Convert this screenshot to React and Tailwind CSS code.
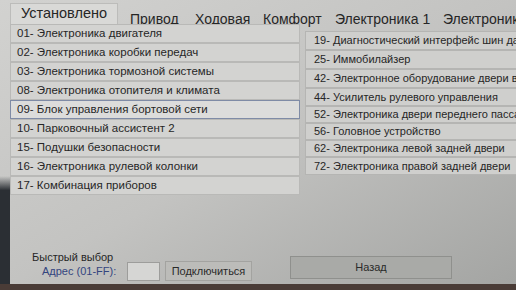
import React from 'react';

const leftItems = [
  '01- Электроника двигателя',
  '02- Электроника коробки передач',
  '03- Электроника тормозной системы',
  '08- Электроника отопителя и климата',
  '09- Блок управления бортовой сети',
  '10- Парковочный ассистент 2',
  '15- Подушки безопасности',
  '16- Электроника рулевой колонки',
  '17- Комбинация приборов',
];

const rightItems = [
  { label: '19- Диагностический интерфейс шин данных', h: 'h-[19px]' },
  { label: '25- Иммобилайзер', h: 'h-[19px]' },
  { label: '42- Электронное оборудование двери водителя', h: 'h-[19px]' },
  { label: '44- Усилитель рулевого управления', h: 'h-[18px]' },
  { label: '52- Электроника двери переднего пассажира', h: 'h-[17px]' },
  { label: '56- Головное устройство', h: 'h-[17px]' },
  { label: '62- Электроника левой задней двери', h: 'h-[17px]' },
  { label: '72- Электроника правой задней двери', h: 'h-[18px]' },
];

export default function App() {
  return (
    <div className="w-[516px] h-[290px] overflow-hidden flex flex-col bg-gradient-to-br from-[#d2d2d0] via-[#c3c3c1] to-[#a3a4a2] text-[#262626] font-['Liberation_Sans',Arial,sans-serif]">
      <div className="flex flex-1 min-h-0">
        {/* dark monitor bezel creeping in on the left */}
        <div className="w-[10px] shrink-0 bg-gradient-to-b from-transparent from-62% to-[#2b2f34] to-67%" />

        <div className="flex-1 flex flex-col min-w-0">
          {/* tabs */}
          <div className="h-[24px] shrink-0 flex items-start whitespace-nowrap text-[14px]">
            <div className="shrink-0 mt-[3px] h-[21px] w-[108px] pl-[10px] text-[14.5px] leading-[19px] bg-[#d9d9d7] border-t border-l border-r border-[#bcbcba]">
              Установлено
            </div>
            <div className="flex min-w-0 ml-[12px] pt-[11px] leading-[16px] overflow-hidden">
              <span className="w-[65px] shrink-0">Привод</span>
              <span className="w-[68px] shrink-0">Ходовая</span>
              <span className="w-[72px] shrink-0">Комфорт</span>
              <span className="w-[108px] shrink-0">Электроника 1</span>
              <span className="shrink-0">Электроника 2</span>
            </div>
          </div>

          {/* module lists */}
          <div className="flex">
            <div className="w-[290px] shrink-0 flex flex-col">
              {leftItems.map((item, i) => (
                <div
                  key={item}
                  className={
                    i === 4
                      ? 'h-[19px] flex items-center pl-[6px] text-[11.5px] bg-[#dcdcdb] border border-[#7f8ba6]'
                      : 'h-[19px] flex items-center pl-[6px] text-[11.5px] bg-[#d3d3d1] border border-[#b9b9b7]'
                  }
                >
                  {item}
                </div>
              ))}
            </div>
            <div className="flex-1 min-w-0 ml-[5px] mt-[7px] flex flex-col">
              {rightItems.map((item) => (
                <div
                  key={item.label}
                  className={`${item.h} flex items-center pl-[8px] text-[11px] whitespace-nowrap overflow-hidden bg-[#cfcfcd] border border-[#b5b5b3] border-r-0`}
                >
                  {item.label}
                </div>
              ))}
            </div>
          </div>

          <div className="flex-1" />

          {/* quick select */}
          <div className="flex items-end pb-[3px] text-[11px]">
            <div className="flex flex-col pl-[22px]">
              <span className="leading-[12px] -mb-[2px]">Быстрый выбор</span>
              <div className="flex items-center">
                <span className="ml-[10px] w-[85px] text-[#34457e]">Адрес (01-FF):</span>
                <div className="w-[33px] h-[19px] bg-[#d6d6d4] border border-[#9d9d9b]" />
                <button className="ml-[5px] w-[87px] h-[20px] bg-[#bcbcb9] border border-[#a3a3a0] text-[11px] text-[#2a2a2a]">
                  Подключиться
                </button>
              </div>
            </div>
            <button className="ml-[38px] mb-[2px] w-[162px] h-[23px] bg-[#a9aaa7] border border-[#8f908d] text-[11px] text-[#2a2a2a]">
              Назад
            </button>
          </div>
        </div>
      </div>
      <div className="h-[6px] shrink-0 bg-[#4a3c37]" />
    </div>
  );
}
